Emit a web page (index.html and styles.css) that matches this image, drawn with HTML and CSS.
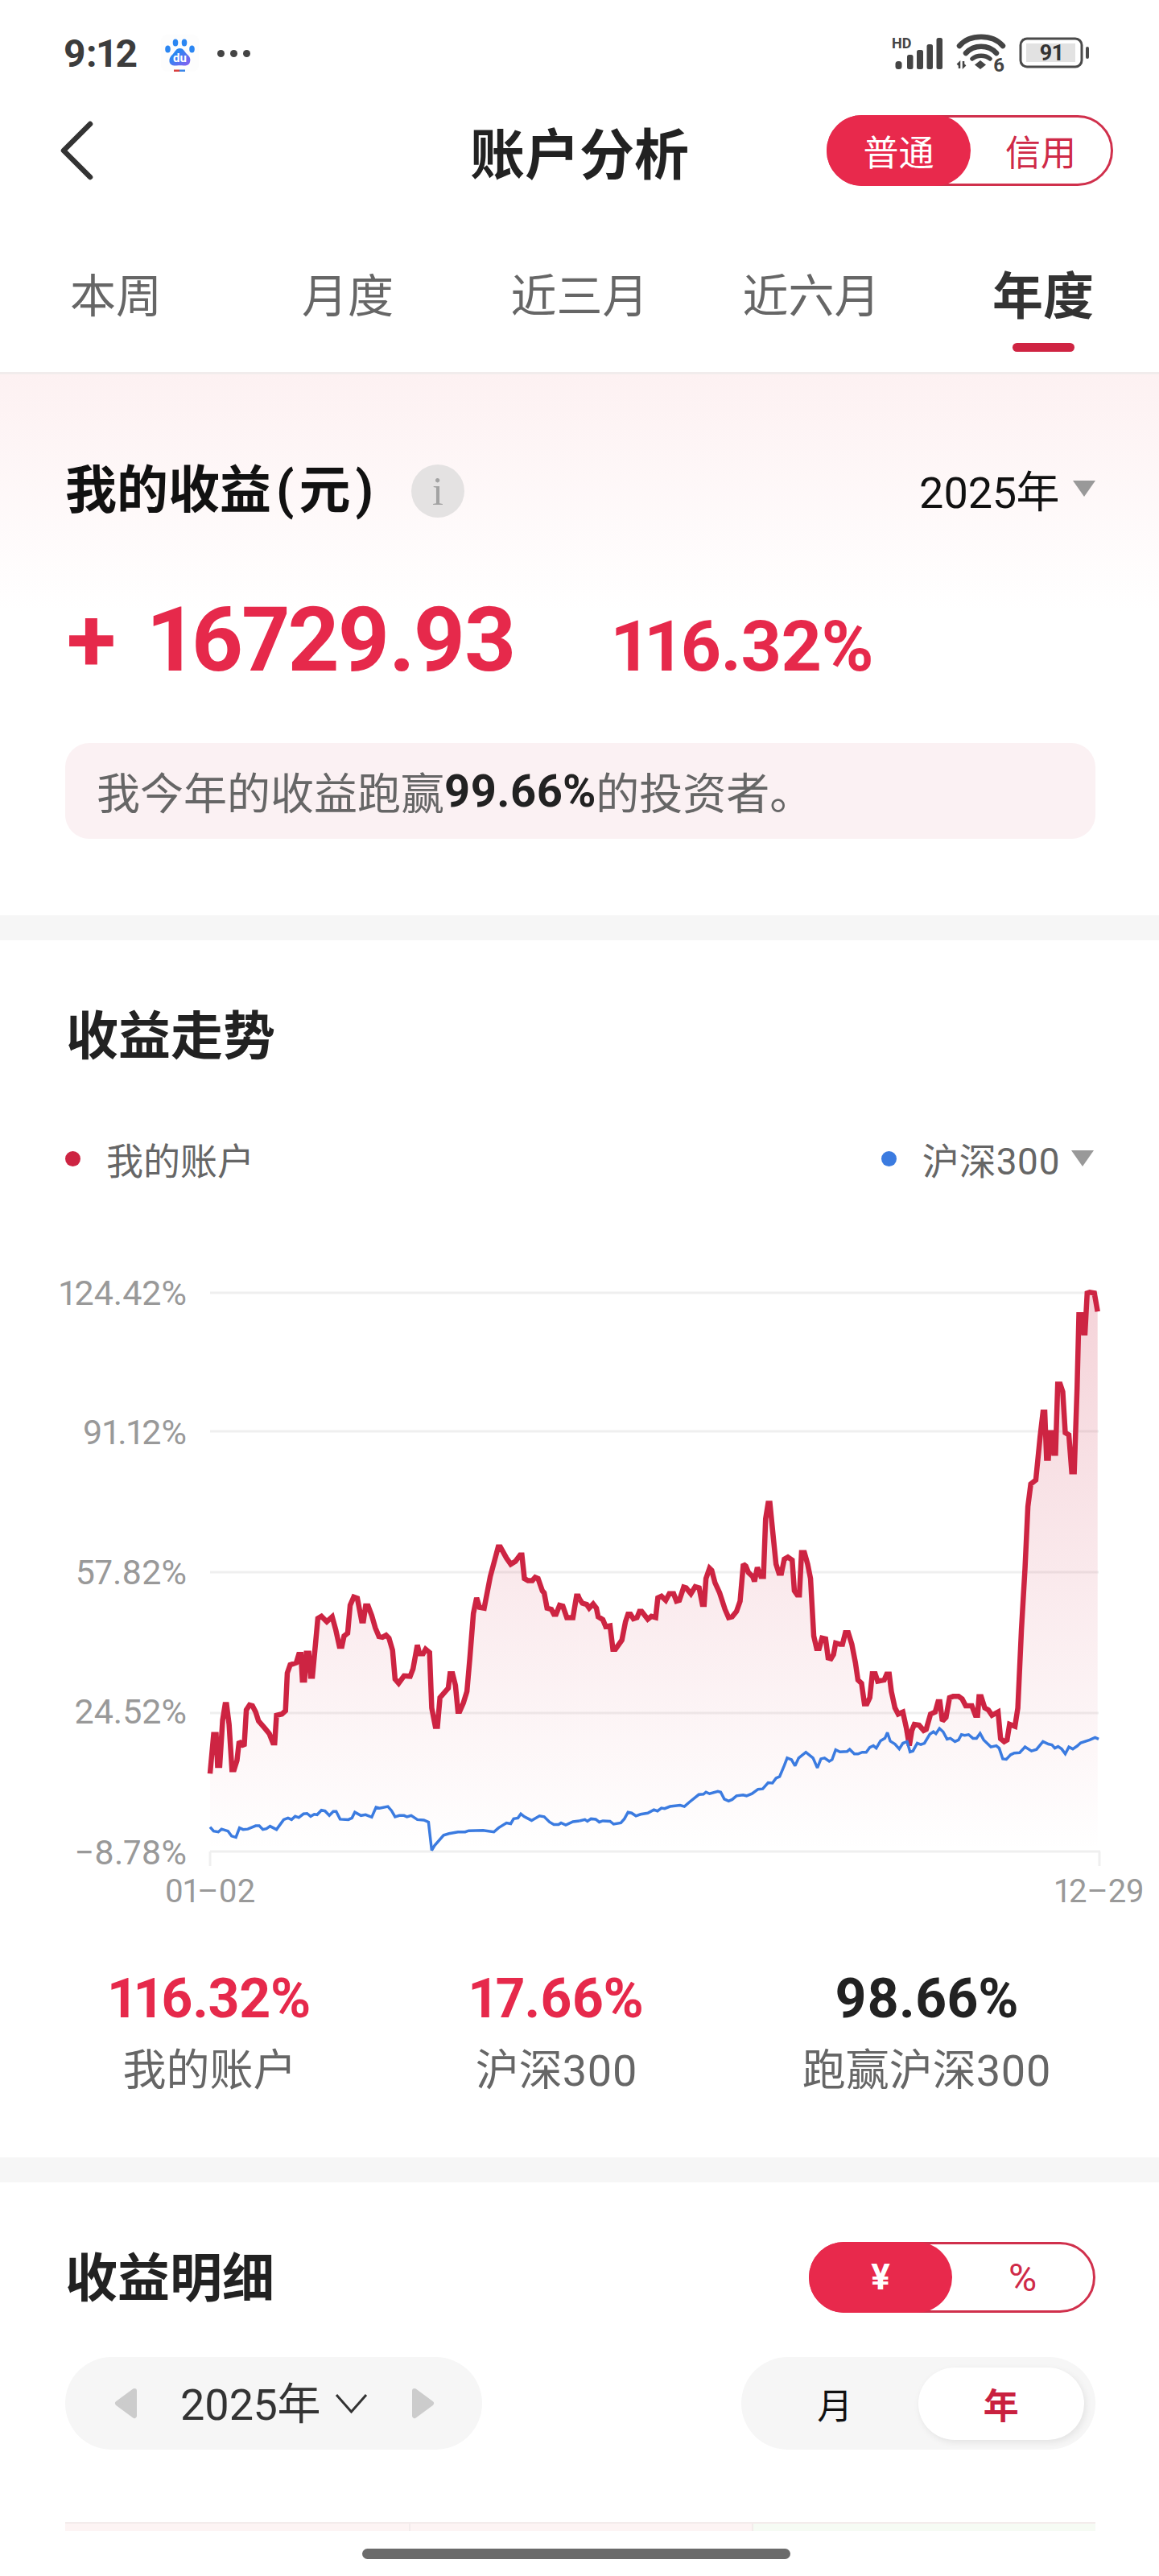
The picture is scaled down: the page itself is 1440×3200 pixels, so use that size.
FILE: index.html
```html
<!DOCTYPE html>
<html lang="zh-CN">
<head>
    <meta charset="UTF-8">
    <meta name="viewport" content="width=device-width, initial-scale=1.0">
    <title>账户分析</title>
    <link rel="stylesheet" href="styles.css">
</head>
<body>
<div class="page">
    <!-- 状态栏 -->
    <div class="status-bar">
        <div class="status-left">
            <span class="time">9:12</span>
            <svg class="baidu" viewBox="0 0 47 46" width="47" height="46">
                <defs>
                    <linearGradient id="paw" x1="0" y1="0" x2="1" y2="1">
                        <stop offset="0.3" stop-color="#2b86f2"/>
                        <stop offset="1" stop-color="#8a5cf0"/>
                    </linearGradient>
                </defs>
                <rect width="47" height="46" rx="8" fill="#fdfdfd"/>
                <ellipse cx="8.500" cy="18" rx="3.300" ry="4.600" fill="#2b86f2"/>
                <ellipse cx="18" cy="10" rx="3.300" ry="4.600" fill="#2b86f2"/>
                <ellipse cx="29" cy="10" rx="3.300" ry="4.600" fill="#2b86f2"/>
                <ellipse cx="38.500" cy="18" rx="3.300" ry="4.600" fill="#2b86f2"/>
                <path d="M23.500 17c5 0 6 5 9.500 8 3 3 4 5 3 9-1 4-5 5-8 4.500-3-.5-5-.5-9 0-4 .5-8-1-8.500-5-.5-4 1-6 4-9 3-3 4-7.500 9-7.500z" fill="url(#paw)"/>
                <text x="23.500" y="34" text-anchor="middle" class="baidu-du">du</text>
                <rect x="16" y="43.500" width="7" height="2.500" fill="#d9403f"/>
                <rect x="23" y="43.500" width="7" height="2.500" fill="#3b86e8"/>
            </svg>
            <span class="dots"><i></i><i></i><i></i></span>
        </div>
        <div class="status-right">
            <svg viewBox="0 0 64 42" width="64" height="42">
                <text x="0" y="15" class="hd">HD</text>
                <rect x="4.500" y="31" width="8" height="10" rx="3.500" fill="#444"/>
                <rect x="19" y="23" width="7.500" height="18" rx="2.500" fill="#444"/>
                <rect x="31" y="17" width="8" height="24" rx="2.500" fill="#444"/>
                <rect x="43.500" y="10" width="7.500" height="31" rx="2.500" fill="#444"/>
                <rect x="55.500" y="2" width="7.500" height="39" rx="2.500" fill="#444"/>
            </svg>
            <svg viewBox="0 0 60 47" width="60" height="47">
                <path d="M3 14C16 -1 44 -1 57 14" fill="none" stroke="#444" stroke-width="6.500" stroke-linecap="round"/>
                <path d="M11 23C21 12 39 12 49 23" fill="none" stroke="#444" stroke-width="6.500" stroke-linecap="round"/>
                <path d="M19 30C25 25 35 25 41 30" fill="none" stroke="#444" stroke-width="5.500" stroke-linecap="round"/>
                <path d="M29 32l7 5.500-7 5.500-7-5.500z" fill="#444"/>
                <path d="M3 42v-7l-2.500 2.500M8 33v7l2.500-2.500" fill="none" stroke="#444" stroke-width="2.500"/>
                <text x="45" y="46" class="wifi-six">6</text>
            </svg>
            <svg viewBox="0 0 88 40" width="88" height="40">
                <rect x="2" y="2" width="76" height="35" rx="8" fill="none" stroke="#4a4a4a" stroke-width="3"/>
                <rect x="9" y="8" width="61" height="23" fill="#e2e2e2"/>
                <rect x="83" y="12" width="4" height="15" rx="2" fill="#4a4a4a"/>
                <text x="40" y="29" text-anchor="middle" class="battery-num">91</text>
            </svg>
        </div>
    </div>

    <!-- 导航 -->
    <div class="nav">
        <svg class="back" viewBox="0 0 44 76" width="44" height="76">
            <path d="M38 5 L5 38 L38 71" fill="none" stroke="#333" stroke-width="6.500" stroke-linecap="round" stroke-linejoin="round"/>
        </svg>
        <h1 class="nav-title">账户分析</h1>
        <div class="toggle nav-toggle">
            <span class="toggle-on">普通</span>
            <span class="toggle-off">信用</span>
        </div>
    </div>

    <div class="tabs">
        <div class="tab"><span>本周</span></div>
        <div class="tab"><span>月度</span></div>
        <div class="tab"><span>近三月</span></div>
        <div class="tab"><span>近六月</span></div>
        <div class="tab active"><span>年度</span><i></i></div>
    </div>

    <!-- 我的收益 -->
    <section class="hero">
        <div class="hero-head">
            <div class="hero-title">
                <h2>我的收益<span class="paren">(</span>元<span class="paren">)</span></h2>
                <span class="info">i</span>
            </div>
            <div class="picker"><span>2025年</span><i class="tri"></i></div>
        </div>
        <div class="amount-row">
            <span class="plus">+</span>
            <span class="amount">16729.93</span>
            <span class="amount-pct">116.32%</span>
        </div>
        <div class="note">我今年的收益跑赢<b>99.66%</b>的投资者。</div>
    </section>

    <div class="band"></div>

    <!-- 收益走势 -->
    <section class="trend">
        <h2 class="section-title">收益走势</h2>
        <div class="legend">
            <div class="legend-item"><i class="dot red"></i><span>我的账户</span></div>
            <div class="legend-item"><i class="dot blue"></i><span>沪深300</span><i class="tri"></i></div>
        </div>
        <svg class="chart" viewBox="0 1580 1440 800" width="1440" height="800">
            <defs>
                <linearGradient id="area" gradientUnits="userSpaceOnUse" x1="0" y1="130" x2="0" y2="1490">
                    <stop offset="0" stop-color="#cc2340" stop-opacity=".2"/>
                    <stop offset="1" stop-color="#cc2340" stop-opacity="0"/>
                </linearGradient>
            </defs>
            <g class="grid">
                <path d="M261 1606H1365M261 1778H1365M261 1953H1365M261 2128H1365M261 2300H1367M261 2300V2318M1366 2300V2318"/>
            </g>
            <g class="axis">
                <text x="232" y="1621" text-anchor="end">124.42%</text>
                <text x="232" y="1794" text-anchor="end">91.12%</text>
                <text x="232" y="1968" text-anchor="end">57.82%</text>
                <text x="232" y="2141" text-anchor="end">24.52%</text>
                <text x="232" y="2316" text-anchor="end">−8.78%</text>
                <text x="261" y="2363" text-anchor="middle" class="date">01–02</text>
                <text x="1422" y="2363" text-anchor="end" class="date">12–29</text>
            </g>
            <!-- 左半段 -->
            <g transform="translate(40 1540) scale(.4464 .5102)">
                <polygon class="area" points="495,1490 495,1300 505,1205 512,1205 516,1280 522,1280 530,1170 537,1132 541,1132 548,1180 556,1290 562,1290 570,1268 576,1222 590,1233 596,1145 605,1133 613,1135 622,1150 630,1172 648,1190 660,1203 670,1225 675,1225 680,1158 695,1155 705,1147 710,1055 718,1035 735,1030 742,1010 748,1010 752,1072 758,1072 763,1007 770,1007 775,1063 780,1063 790,970 795,922 805,917 820,930 835,918 845,950 855,990 862,990 868,965 878,958 885,890 895,870 905,873 917,928 922,928 928,892 935,892 945,915 955,945 965,966 975,968 985,963 993,970 1003,1000 1010,1070 1020,1080 1035,1062 1052,1063 1060,1045 1072,987 1078,1008 1088,1008 1095,997 1106,1005 1112,1140 1122,1185 1128,1185 1135,1115 1150,1100 1158,1092 1163,1057 1170,1057 1178,1085 1185,1148 1190,1148 1200,1128 1210,1100 1218,1020 1228,910 1237,872 1245,895 1258,897 1275,820 1297,748 1303,748 1320,775 1332,790 1345,783 1358,768 1363,768 1370,825 1380,830 1392,830 1400,822 1408,825 1420,855 1425,860 1433,897 1445,900 1452,912 1458,912 1468,890 1477,892 1488,920 1505,920 1515,868 1520,868 1523.200,875 1523.200,1490"/>
                <polyline class="line-red" points="495,1300 505,1205 512,1205 516,1280 522,1280 530,1170 537,1132 541,1132 548,1180 556,1290 562,1290 570,1268 576,1222 590,1233 596,1145 605,1133 613,1135 622,1150 630,1172 648,1190 660,1203 670,1225 675,1225 680,1158 695,1155 705,1147 710,1055 718,1035 735,1030 742,1010 748,1010 752,1072 758,1072 763,1007 770,1007 775,1063 780,1063 790,970 795,922 805,917 820,930 835,918 845,950 855,990 862,990 868,965 878,958 885,890 895,870 905,873 917,928 922,928 928,892 935,892 945,915 955,945 965,966 975,968 985,963 993,970 1003,1000 1010,1070 1020,1080 1035,1062 1052,1063 1060,1045 1072,987 1078,1008 1088,1008 1095,997 1106,1005 1112,1140 1122,1185 1128,1185 1135,1115 1150,1100 1158,1092 1163,1057 1170,1057 1178,1085 1185,1148 1190,1148 1200,1128 1210,1100 1218,1020 1228,910 1237,872 1245,895 1258,897 1275,820 1297,748 1303,748 1320,775 1332,790 1345,783 1358,768 1363,768 1370,825 1380,830 1392,830 1400,822 1408,825 1420,855 1425,860 1433,897 1445,900 1452,912 1458,912 1468,890 1477,892 1488,920 1505,920 1515,868 1520,868 1523.200,875"/>
                <polyline class="line-blue" points="495,1430 505,1440 518,1442 527,1435 545,1440 555,1452 567,1455 577,1432 587,1436 600,1435 622,1427 632,1427 642,1436 652,1434 662,1428 680,1436 700,1412 712,1408 722,1412 732,1404 742,1407 755,1398 765,1397 775,1404 785,1399 793,1400 805,1389 815,1391 827,1402 838,1392 846,1392 857,1411 880,1412 890,1408 898,1394 915,1402 928,1400 945,1406 957,1382 967,1384 990,1380 1000,1390 1010,1405 1022,1402 1035,1402 1043,1405 1055,1402 1072,1412 1090,1413 1103,1418 1112,1487 1120,1475 1145,1450 1160,1446 1185,1442 1205,1442 1215,1439 1255,1438 1285,1442 1298,1432 1320,1420 1332,1422 1340,1410 1352,1408 1360,1398 1370,1405 1390,1414 1412,1403 1425,1405 1440,1418 1452,1424 1465,1424 1472,1420 1485,1425 1505,1417 1523.200,1415"/>
            </g>
            <!-- 右半段 -->
            <g transform="translate(720 1540) scale(.4464 .5102)">
                <polygon class="area" points="0,1490 0,875 8,885 20,888 27,897 38,887 47,897 52,918 65,925 73,942 85,940 93,997 100,997 118,975 128,930 135,912 142,912 150,923 160,920 167,905 173,905 190,924 200,917 212,920 218,872 228,868 240,878 250,862 262,862 270,880 278,878 290,846 297,848 310,862 322,845 333,848 342,888 347,888 352,825 362,800 368,805 377,835 390,860 405,900 415,920 425,918 437,905 447,880 456,790 463,795 470,810 482,820 487,832 495,798 505,820 512,820 518,680 525,642 530,642 540,730 547,790 555,812 562,812 570,778 580,773 592,780 598,855 606,865 612,865 618,762 626,762 635,790 643,825 652,965 660,995 667,995 675,970 685,972 692,1018 700,1020 707,1010 713,982 725,985 732,985 740,957 748,957 758,985 768,1030 775,1072 785,1080 793,1130 800,1130 808,1115 815,1057 823,1057 830,1075 848,1072 855,1058 862,1058 868,1100 878,1140 887,1155 900,1150 910,1190 918,1232 925,1195 932,1180 945,1182 958,1195 965,1192 977,1155 990,1150 998,1125 1003,1125 1010,1172 1020,1163 1030,1115 1040,1112 1055,1112 1065,1118 1075,1135 1092,1135 1102,1158 1108,1158 1112,1113 1118,1113 1128,1140 1138,1145 1148,1158 1165,1150 1172,1215 1182,1222 1190,1218 1197,1180 1212,1185 1220,1140 1230,950 1240,800 1248,650 1256,595 1270,585 1282,480 1290,420 1295,420 1300,532 1305,532 1308,470 1315,470 1320,520 1325,520 1331,352 1338,352 1345,370 1352,470 1362,475 1370,565 1377,565 1385,360 1390,183 1397,183 1403,227 1407,227 1413,130 1420,128 1433,130 1442,175 1442,1490"/>
                <polyline class="line-red" points="0,875 8,885 20,888 27,897 38,887 47,897 52,918 65,925 73,942 85,940 93,997 100,997 118,975 128,930 135,912 142,912 150,923 160,920 167,905 173,905 190,924 200,917 212,920 218,872 228,868 240,878 250,862 262,862 270,880 278,878 290,846 297,848 310,862 322,845 333,848 342,888 347,888 352,825 362,800 368,805 377,835 390,860 405,900 415,920 425,918 437,905 447,880 456,790 463,795 470,810 482,820 487,832 495,798 505,820 512,820 518,680 525,642 530,642 540,730 547,790 555,812 562,812 570,778 580,773 592,780 598,855 606,865 612,865 618,762 626,762 635,790 643,825 652,965 660,995 667,995 675,970 685,972 692,1018 700,1020 707,1010 713,982 725,985 732,985 740,957 748,957 758,985 768,1030 775,1072 785,1080 793,1130 800,1130 808,1115 815,1057 823,1057 830,1075 848,1072 855,1058 862,1058 868,1100 878,1140 887,1155 900,1150 910,1190 918,1232 925,1195 932,1180 945,1182 958,1195 965,1192 977,1155 990,1150 998,1125 1003,1125 1010,1172 1020,1163 1030,1115 1040,1112 1055,1112 1065,1118 1075,1135 1092,1135 1102,1158 1108,1158 1112,1113 1118,1113 1128,1140 1138,1145 1148,1158 1165,1150 1172,1215 1182,1222 1190,1218 1197,1180 1212,1185 1220,1140 1230,950 1240,800 1248,650 1256,595 1270,585 1282,480 1290,420 1295,420 1300,532 1305,532 1308,470 1315,470 1320,520 1325,520 1331,352 1338,352 1345,370 1352,470 1362,475 1370,565 1377,565 1385,360 1390,183 1397,183 1403,227 1407,227 1413,130 1420,128 1433,130 1442,175"/>
                <polyline class="line-blue" points="0,1415 15,1412 22,1416 32,1410 45,1411 55,1418 65,1415 85,1416 95,1423 115,1420 125,1410 135,1394 145,1396 157,1403 170,1399 190,1396 207,1388 217,1391 228,1384 237,1385 252,1380 280,1377 292,1380 305,1370 332,1351 345,1350 352,1345 362,1349 385,1343 393,1345 403,1362 415,1367 425,1363 437,1354 455,1352 465,1354 480,1349 497,1338 510,1337 525,1322 537,1323 547,1311 557,1307 570,1280 578,1262 590,1266 600,1281 610,1262 630,1248 650,1262 662,1286 672,1264 682,1262 695,1270 703,1266 713,1242 725,1247 745,1246 752,1241 765,1252 775,1252 787,1248 798,1248 808,1236 818,1232 826,1238 838,1220 850,1214 857,1200 865,1221 878,1228 890,1240 900,1226 912,1222 920,1247 928,1245 940,1226 950,1229 960,1226 975,1204 985,1198 992,1203 1002,1190 1012,1198 1023,1216 1032,1214 1045,1222 1055,1218 1063,1205 1072,1207 1083,1205 1095,1214 1105,1214 1115,1202 1125,1218 1145,1235 1160,1232 1168,1238 1178,1264 1188,1265 1200,1254 1210,1250 1225,1249 1240,1235 1258,1245 1272,1241 1290,1222 1305,1228 1315,1230 1323,1238 1332,1234 1342,1240 1352,1252 1362,1235 1373,1240 1385,1233 1395,1225 1420,1218 1435,1212 1445,1216"/>
            </g>
        </svg>
        <div class="stats">
            <div class="stat"><b class="up">116.32%</b><span>我的账户</span></div>
            <div class="stat"><b class="up">17.66%</b><span>沪深300</span></div>
            <div class="stat"><b>98.66%</b><span>跑赢沪深300</span></div>
        </div>
    </section>

    <div class="band"></div>

    <!-- 收益明细 -->
    <section class="detail">
        <div class="detail-head">
            <h2 class="section-title">收益明细</h2>
            <div class="toggle unit-toggle">
                <span class="toggle-on">¥</span>
                <span class="toggle-off">%</span>
            </div>
        </div>
        <div class="detail-controls">
            <div class="year-pill">
                <svg viewBox="0 0 29 39" width="29" height="39">
                    <path d="M25 4 L4 19.500 L25 35z" fill="#ccc" stroke="#ccc" stroke-width="6" stroke-linejoin="round"/>
                </svg>
                <span class="year-text">2025年</span>
                <svg class="chevron" viewBox="0 0 41 25" width="41" height="25">
                    <path d="M2 2 L20.500 23 L39 2" fill="none" stroke="#333" stroke-width="3"/>
                </svg>
                <svg class="arrow-right" viewBox="0 0 29 39" width="29" height="39">
                    <path d="M4 4 L25 19.500 L4 35z" fill="#ccc" stroke="#ccc" stroke-width="6" stroke-linejoin="round"/>
                </svg>
            </div>
            <div class="period">
                <span class="period-item">月</span>
                <span class="period-item current">年</span>
            </div>
        </div>
        <div class="table-top">
            <div class="cell pink"></div>
            <div class="cell pink"></div>
            <div class="cell green"></div>
        </div>
    </section>

    <div class="home-area"><i class="home-bar"></i></div>
</div>
</body>
</html>
```

FILE: styles.css
```css
* {
    box-sizing: border-box;
}

body {
    margin: 0;
    background-color: #fff;
    font-family: Roboto, "Noto Sans CJK SC", sans-serif;
    font-variant-numeric: proportional-nums;
    color: #222;
}

h1, h2 {
    margin: 0;
}

i {
    display: block;
    font-style: normal;
}

.page {
    width: 1440px;
    height: 3200px;
    overflow: hidden;
    display: flex;
    flex-direction: column;
}

/* 状态栏 */
.status-bar {
    height: 132px;
    padding: 0 86px 0 79px;
    display: flex;
    align-items: center;
    justify-content: space-between;
}

.status-left {
    display: flex;
    align-items: center;
}

.time {
    font-size: 48px;
    font-weight: 700;
    color: #3c3c3c;
    width: 121px;
}

.baidu-du {
    font-size: 15px;
    font-weight: 700;
    fill: #fff;
}

.dots {
    display: flex;
    gap: 7px;
    margin-left: 23px;
}

.dots i {
    width: 9px;
    height: 9px;
    border-radius: 50%;
    background-color: #444;
}

.status-right {
    display: flex;
    align-items: center;
    gap: 17px;
}

.status-right svg {
    overflow: visible;
}

.hd {
    font-size: 18px;
    font-weight: 700;
    fill: #444;
}

.wifi-six {
    font-size: 24px;
    font-weight: 700;
    fill: #444;
}

.battery-num {
    font-size: 27px;
    font-weight: 700;
    fill: #333;
}

/* 导航 */
.nav {
    height: 110px;
    padding: 0 57px 0 74px;
    display: grid;
    grid-template-columns: 1fr auto 1fr;
    align-items: center;
}

.nav-title {
    font-size: 68px;
    font-weight: 700;
    color: #222;
    margin-left: -17px;
}

.nav-toggle {
    justify-self: end;
}

.toggle {
    display: flex;
    border: 3px solid #d0304c;
    border-radius: 44px;
    height: 88px;
    width: 356px;
    font-size: 44px;
}

.toggle span {
    flex: 1;
    display: flex;
    align-items: center;
    justify-content: center;
}

.toggle .toggle-on {
    flex: none;
    width: 179px;
    margin: -3px 0 -3px -3px;
    background-color: #e8294c;
    color: #fff;
    border-radius: 44px;
}

.toggle .toggle-off {
    color: #cf2a48;
}

.tabs {
    height: 223px;
    padding-top: 95px;
    display: grid;
    grid-template-columns: repeat(5, 1fr);
    border-bottom: 3px solid #f1ecec;
}

.tab {
    display: flex;
    flex-direction: column;
    align-items: center;
    font-size: 57px;
    line-height: 64px;
    color: #666;
}

.tab.active {
    font-size: 63px;
    font-weight: 700;
    color: #333;
}

.tab.active i {
    width: 77px;
    height: 11px;
    margin-top: 25px;
    border-radius: 6px;
    background-color: #cf2442;
}

/* 我的收益 */
.hero {
    height: 672px;
    padding: 112px 79px 0 81px;
    background: linear-gradient(#fdf1f2, #fff 44%);
}

.hero-head {
    display: flex;
    align-items: center;
    justify-content: space-between;
    height: 66px;
}

.hero-title {
    display: flex;
    align-items: center;
    gap: 41px;
}

.hero-title h2 {
    font-size: 64px;
    font-weight: 700;
    color: #111;
    line-height: 66px;
}

.paren {
    margin: 0 6px;
}

.info {
    width: 66px;
    height: 66px;
    border-radius: 50%;
    background-color: #e4e2e2;
    color: #a3a3a3;
    font-family: "Liberation Serif", serif;
    font-size: 50px;
    display: flex;
    align-items: center;
    justify-content: center;
}

.picker {
    display: flex;
    align-items: center;
    gap: 17px;
    font-size: 54px;
    letter-spacing: -0.5px;
    color: #111;
    margin-top: -6px;
}

.tri {
    width: 0;
    height: 0;
    border-left: 14px solid transparent;
    border-right: 14px solid transparent;
    border-top: 20px solid #999;
}

.amount-row {
    display: flex;
    align-items: baseline;
    margin-top: 92px;
    height: 120px;
    line-height: 120px;
    color: #e6294b;
    font-weight: 700;
}

.plus {
    font-size: 112px;
    width: 104px;
    padding-left: 2px;
}

.amount {
    font-size: 112px;
    letter-spacing: -2px;
    width: 576px;
}

.amount-pct {
    font-size: 88px;
    letter-spacing: -0.5px;
}

.note {
    margin-top: 68px;
    height: 119px;
    padding-left: 39px;
    border-radius: 30px;
    background-color: #fbf1f3;
    display: flex;
    align-items: center;
    font-size: 54px;
    color: #666;
}

.note b {
    color: #222;
    font-size: 56px;
    font-weight: 700;
}

.band {
    height: 31px;
    background-color: #f6f6f6;
    flex: none;
}

/* 收益走势 */
.trend {
    height: 1512px;
    padding-top: 80px;
}

.section-title {
    font-size: 65px;
    line-height: 80px;
    font-weight: 700;
    color: #222;
}

.trend .section-title {
    padding-left: 82px;
}

.legend {
    margin-top: 86px;
    height: 50px;
    padding: 0 81px;
    display: flex;
    align-items: center;
    justify-content: space-between;
    font-size: 46px;
    color: #666;
}

.legend-item {
    display: flex;
    align-items: center;
}

.dot {
    width: 19px;
    height: 19px;
    border-radius: 50%;
    margin-right: 32px;
}

.dot.red {
    background-color: #cd2442;
}

.dot.blue {
    background-color: #3b7be0;
}

.legend .tri {
    margin-left: 14px;
}

.chart {
    display: block;
    margin-top: 116px;
}

.grid path {
    fill: none;
    stroke: #efefef;
    stroke-width: 3;
}

.axis text {
    font-size: 43px;
    fill: #999;
}

.axis text.date {
    font-size: 40px;
}

.area {
    fill: url(#area);
}

.line-red, .line-blue {
    fill: none;
    vector-effect: non-scaling-stroke;
    stroke-linejoin: miter;
    stroke-miterlimit: 2;
}

.line-red {
    stroke: #cd2442;
    stroke-width: 6.5;
}

.line-blue {
    stroke: #3b7be0;
    stroke-width: 3.5;
}

.stats {
    margin-top: 63px;
    padding: 0 134px 0 135px;
    display: flex;
    justify-content: space-between;
}

.stat {
    display: flex;
    flex-direction: column;
    align-items: center;
}

.stat b {
    font-size: 68px;
    line-height: 80px;
    font-weight: 700;
    letter-spacing: -0.3px;
    color: #222;
}

.stat b.up {
    color: #e6294b;
}

.stat span {
    margin-top: 20px;
    font-size: 54px;
    line-height: 60px;
    color: #666;
}

/* 收益明细 */
.detail {
    height: 433px;
    padding: 74px 79px 0 81px;
}

.detail-head {
    display: flex;
    align-items: center;
    justify-content: space-between;
    height: 88px;
}

.detail-head .section-title {
    padding-top: 4px;
}

.unit-toggle .toggle-on {
    width: 178px;
    font-weight: 700;
}

.unit-toggle .toggle-off {
    font-size: 48px;
}

.detail-controls {
    margin-top: 55px;
    display: flex;
    justify-content: space-between;
}

.year-pill {
    width: 518px;
    height: 115px;
    border-radius: 58px;
    background-color: #f6f6f6;
    padding-left: 61px;
    display: flex;
    align-items: center;
    font-size: 54px;
    letter-spacing: -0.5px;
    color: #333;
}

.year-text {
    margin: -6px 0 0 53px;
}

.chevron {
    margin-left: 18px;
}

.arrow-right {
    margin-left: 54px;
}

.period {
    width: 440px;
    height: 115px;
    border-radius: 58px;
    background-color: #f6f6f6;
    padding: 13px 14px 12px 13px;
    display: grid;
    grid-template-columns: 1fr 1fr;
}

.period-item {
    display: flex;
    align-items: center;
    justify-content: center;
    font-size: 44px;
    color: #111;
}

.period-item.current {
    background-color: #fff;
    border-radius: 45px;
    box-shadow: 2px 3px 8px rgba(0, 0, 0, 0.08);
    color: #c9213f;
    font-weight: 700;
}

.table-top {
    margin-top: 90px;
    height: 11px;
    display: grid;
    grid-template-columns: repeat(3, 1fr);
    border-top: 2px solid #f3ecec;
}

.cell + .cell {
    border-left: 2px solid #f3ecec;
}

.cell.pink {
    background-color: #fdf4f4;
}

.cell.green {
    background-color: #f6fbf4;
}

.home-area {
    flex: none;
    height: 56px;
    padding: 22px 8px 0 0;
    display: flex;
    justify-content: center;
}

.home-bar {
    width: 532px;
    height: 13px;
    border-radius: 7px;
    background-color: #6b6b6b;
}
```
